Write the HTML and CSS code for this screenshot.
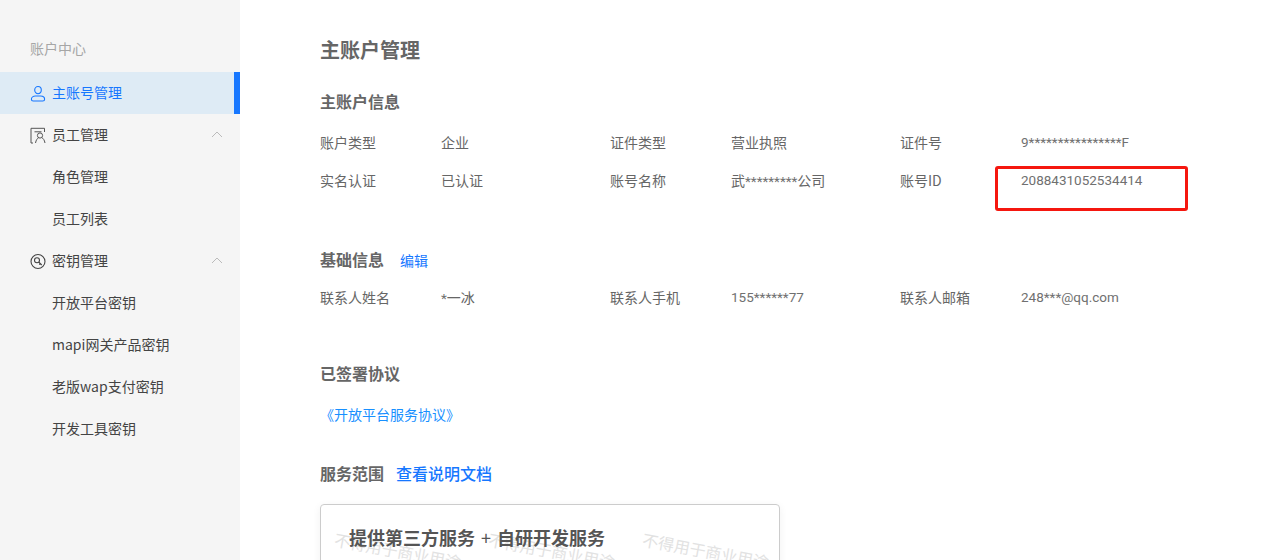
FILE: index.html
```html
<!DOCTYPE html>
<html lang="zh-CN">
<head>
<meta charset="utf-8">
<title>主账户管理</title>
<link rel="stylesheet" href="styles.css">
</head>
<body>
<div class="app">
  <aside class="sidebar">
    <div class="side-title">账户中心</div>
    <nav>
      <a class="item active">
        <svg class="icon" viewBox="0 0 16 16" fill="none" stroke="currentColor" stroke-width="1.1"><ellipse cx="8" cy="4.6" rx="3.3" ry="3.6"/><path d="M3.2 15.500h9.600c1.200 0 1.800-.8 1.800-1.800 0-2-2-3.200-4-3.200H5.400c-2 0-4 1.200-4 3.200 0 1 .6 1.800 1.800 1.800z"/></svg>
        <span>主账号管理</span>
      </a>
      <a class="item">
        <svg class="icon" viewBox="0 0 16 16" fill="none" stroke="#555" stroke-width="1"><path d="M3 15.500H1V.8h13.500v3.700"/><path d="M4.500 4.300h7"/><circle cx="10" cy="8" r="2.600"/><path d="M5.500 15.500c.5-3 2-4.800 3-5.200M15 15.500c-.5-3-2-4.800-3-5.200"/></svg>
        <span>员工管理</span>
        <svg class="chev" viewBox="0 0 12 7" fill="none" stroke="#bbb" stroke-width="1"><path d="M1 6l5-5 5 5"/></svg>
      </a>
      <a class="item sub">角色管理</a>
      <a class="item sub">员工列表</a>
      <a class="item">
        <svg class="icon" viewBox="0 0 16 16" fill="none" stroke="#444" stroke-width="1.100"><circle cx="8" cy="8" r="7"/><circle cx="7" cy="6.800" r="2.500"/><path d="M8.800 8.600l2.900 2.900M10.300 10.100l-1 1" stroke-width="1.300"/></svg>
        <span>密钥管理</span>
        <svg class="chev" viewBox="0 0 12 7" fill="none" stroke="#bbb" stroke-width="1"><path d="M1 6l5-5 5 5"/></svg>
      </a>
      <a class="item sub">开放平台密钥</a>
      <a class="item sub">mapi网关产品密钥</a>
      <a class="item sub">老版wap支付密钥</a>
      <a class="item sub">开发工具密钥</a>
    </nav>
  </aside>
  <main class="main">
    <h1 class="page-title">主账户管理</h1>
    <section class="account">
      <h2 class="sec-title">主账户信息</h2>
      <div class="info-grid first">
        <span class="k">账户类型</span><span class="v">企业</span>
        <span class="k">证件类型</span><span class="v">营业执照</span>
        <span class="k">证件号</span><span class="v num">9****************F</span>
        <span class="k">实名认证</span><span class="v">已认证</span>
        <span class="k">账号名称</span><span class="v">武<span class="num">*********</span>公司</span>
        <span class="k">账号ID</span><span class="v num">2088431052534414</span>
      </div>
      <div class="redbox"></div>
    </section>
    <section class="basic">
      <h2 class="sec-title">基础信息<a class="edit">编辑</a></h2>
      <div class="info-grid second">
        <span class="k">联系人姓名</span><span class="v"><span class="num">*</span>一冰</span>
        <span class="k">联系人手机</span><span class="v num">155******77</span>
        <span class="k">联系人邮箱</span><span class="v num">248***@qq.com</span>
      </div>
    </section>
    <section class="signed">
      <h2 class="sec-title">已签署协议</h2>
      <a class="agreement">《开放平台服务协议》</a>
    </section>
    <section class="scope">
      <h2 class="sec-title">服务范围<a class="doc">查看说明文档</a></h2>
      <div class="card">
        <div class="card-title">提供第三方服务<span class="plus">+</span>自研开发服务</div>
        <span class="mark m1">不得用于商业用途</span>
        <span class="mark m2">不得用于商业用途</span>
        <span class="mark m3">不得用于商业用途</span>
      </div>
    </section>
  </main>
</div>
</body>
</html>
```
FILE: styles.css
```css
* { box-sizing: border-box; }
html, body { margin: 0; height: 100%; overflow: hidden; background: #fff; }
body { font-family: "Noto Sans CJK SC", "Noto Sans", sans-serif; font-size: 14px; color: #666; }
.app { display: flex; height: 560px; overflow: hidden; }
.sidebar { width: 240px; flex: none; background: #f5f5f5; padding-top: 28px; }
.side-title { height: 44px; padding-left: 30px; line-height: 40px; font-size: 14px; color: #a6a6a6; }
.item { display: flex; align-items: center; height: 42px; padding: 0 17px 2px 30px; color: #444; font-size: 14px; }
.item.active { background: #deebf5; color: #1677ff; border-right: 6px solid #1677ff; }
.item.sub { padding-left: 52px; }
.icon { width: 16px; height: 17px; margin: 2px 6px 0 0; flex: none; }
.chev { width: 12px; height: 7px; margin-left: auto; }
.main { flex: 1; padding-left: 80px; min-width: 0; }
.page-title { margin: 0; padding-top: 35px; font-size: 20px; line-height: 30px; font-weight: 700; color: #666; }
.sec-title { margin: 0; font-size: 16px; line-height: 24px; font-weight: 700; color: #666; }
.account { position: relative; margin-top: 24px; width: 870px; }
.info-grid { display: grid; grid-template-columns: 121px 169px 121px 169px 121px 169px; grid-auto-rows: 38px; align-items: center; }
.info-grid.first { margin-top: 10px; }
.info-grid.second { margin-top: 6px; }
.k, .v { font-size: 14px; line-height: 22px; color: #666; }
.num { font-family: Roboto, "Noto Sans", sans-serif; font-size: 13.5px; color: #707070; }
.redbox { position: absolute; left: 675px; top: 77px; width: 193px; height: 45px; border: 3px solid #f5170f; border-radius: 3px; }
.basic { margin-top: 48px; }
.edit { margin-left: 16px; font-size: 14px; font-weight: 400; color: #1677ff; }
.signed { margin-top: 45px; }
.agreement { display: block; margin-top: 18px; line-height: 22px; color: #1890ff; }
.scope { margin-top: 36px; }
.doc { margin-left: 12px; font-size: 16px; font-weight: 500; color: #1677ff; }
.card { position: relative; width: 460px; height: 200px; margin-top: 19px; border: 1px solid #ccc; border-radius: 4px; padding: 19px 28px; box-shadow: 0 2px 8px rgba(0,0,0,.06); overflow: hidden; }
.card-title { position: relative; z-index: 1; font-size: 18px; line-height: 26px; font-weight: 700; color: #555; }
.plus { margin: 0 6px; font-weight: 400; }
.mark { position: absolute; font-size: 16px; color: #e2e2e2; white-space: nowrap; transform: rotate(10.500deg); transform-origin: left top; top: 22px; }
.m1 { left: 16px; }
.m2 { left: 170px; }
.m3 { left: 324px; }
```
